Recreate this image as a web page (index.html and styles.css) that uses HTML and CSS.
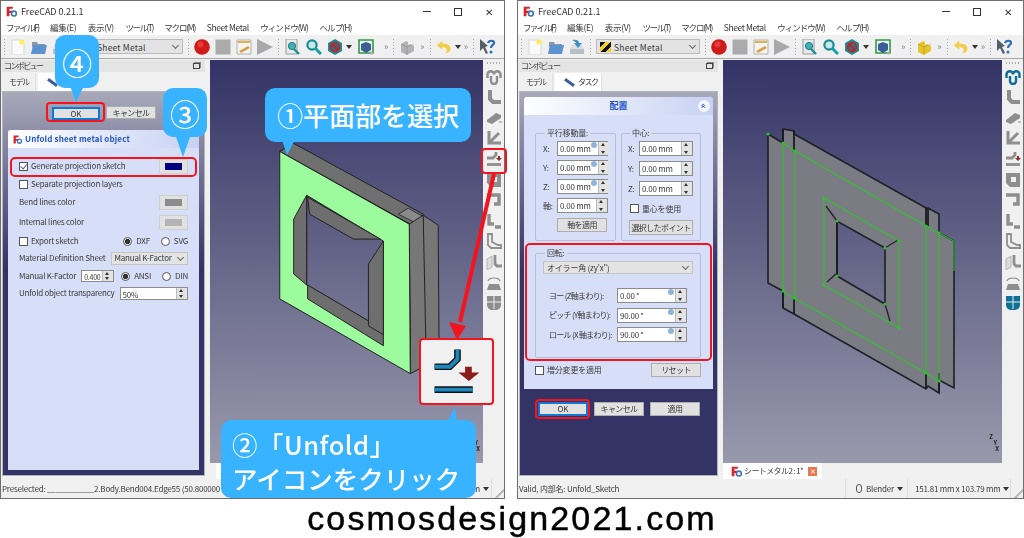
FILE: index.html
```html
<!DOCTYPE html>
<html lang="ja">
<head>
  <meta charset="utf-8">
  <title>FreeCAD Unfold</title>
  <link rel="stylesheet" href="styles.css">
</head>
<body>

<svg class="sprite" width="0" height="0">
  <symbol id="i-logo" viewBox="0 0 16 16">
    <path d="M1 1h9v3H5v3h4v3H5v5H1z" fill="#d5272b"/>
    <circle cx="11.5" cy="11" r="3.6" fill="none" stroke="#3f74b8" stroke-width="2.4"/>
  </symbol>
  <symbol id="i-new" viewBox="0 0 16 16">
    <path d="M2 1h9l3 3v12H2z" fill="#fafafa" stroke="#d8d8d8"/>
    <circle cx="12" cy="3" r="2.6" fill="#ffee55"/>
  </symbol>
  <symbol id="i-open" viewBox="0 0 16 16">
    <path d="M1 3h5l1 2h7v3H1z" fill="#8a97a8"/>
    <path d="M0 15l2-9h14l-2 9z" fill="#5a93d0"/>
  </symbol>
  <symbol id="i-save" viewBox="0 0 16 16">
    <path d="M1 10h14v5H1z" fill="#b9bfc6"/>
    <path d="M3 6h10l2 4H1z" fill="#dde0e3"/>
    <path d="M3 1c4-1 7 0 7 3h3l-4 5-4-5h2c0-1-2-2-4-3z" fill="#3e8ec9"/>
  </symbol>
  <symbol id="i-rec" viewBox="0 0 16 16"><circle cx="8" cy="8" r="7.8" fill="#cf1a1a"/><circle cx="6.5" cy="5.5" r="3" fill="#e83a3a"/></symbol>
  <symbol id="i-stop" viewBox="0 0 16 16"><rect x="0.5" y="0.5" width="15" height="15" fill="#ababab"/></symbol>
  <symbol id="i-macro" viewBox="0 0 16 16">
    <path d="M1 1h14v14H1z" fill="#f4f4f0" stroke="#b0b0b0"/>
    <path d="M2 2h12v2H2z" fill="#e0b050"/>
    <path d="M3 12l9-5 2 2-9 5z" fill="#d9a050"/>
  </symbol>
  <symbol id="i-play" viewBox="0 0 16 16"><path d="M0 0l16 8-16 8z" fill="#a9a9a9"/></symbol>
  <symbol id="i-fit" viewBox="0 0 16 16">
    <path d="M1 0h11v15H1z" fill="#e8eaee" stroke="#9a9a9a"/>
    <circle cx="7" cy="7" r="3.6" fill="#3fb0b5" stroke="#1e7c82"/>
    <path d="M9 10l5 5" stroke="#1e8c92" stroke-width="2.4"/>
  </symbol>
  <symbol id="i-zoom" viewBox="0 0 16 16">
    <circle cx="6" cy="6" r="4.6" fill="#c8e8ea" stroke="#1d8a94" stroke-width="2.2"/>
    <path d="M9 9l6 6" stroke="#17a0a8" stroke-width="3"/>
  </symbol>
  <symbol id="i-style" viewBox="0 0 16 16">
    <path d="M8 0l7 4v8l-7 4-7-4V4z" fill="#1f8b94"/>
    <circle cx="8" cy="8" r="4.4" fill="#2c6f8a" stroke="#c62222" stroke-width="1.8"/>
    <path d="M5 5l6 6" stroke="#c62222" stroke-width="1.8"/>
  </symbol>
  <symbol id="i-box" viewBox="0 0 16 16">
    <path d="M1 1h14v13H1z" fill="none" stroke="#2f9a45" stroke-width="1.6"/>
    <path d="M8 3l5 2v6l-5 3-5-3V5z" fill="#3b5e96"/>
    <circle cx="13.5" cy="14" r="1.6" fill="#aaa"/>
  </symbol>
  <symbol id="i-part" viewBox="0 0 16 16">
    <path d="M2 5l5-3 2 1v3l2-1 4 2v5l-7 4-6-3z" fill="currentColor"/>
    <path d="M2 5l6 3v8M8 8l7-3" fill="none" stroke="#0003" stroke-width=".8"/>
  </symbol>
  <symbol id="i-undo" viewBox="0 0 18 16">
    <path d="M7 1L1 6l6 5V8c3 0 5 1 5 4 0 1-1 3-2 3 5 0 7-3 6-7-1-3-5-4-9-4z" fill="#f2cd4a"/>
  </symbol>
  <symbol id="i-help" viewBox="0 0 16 16">
    <path d="M1 0l8 7-3 1 3 6-2 1-3-6-3 3z" fill="#55606a"/>
    <path d="M9 4c1-3 6-3 6 0 0 2-3 2-3 5" fill="none" stroke="#2b6fb8" stroke-width="2.2"/>
    <circle cx="12" cy="13" r="1.5" fill="#2b6fb8"/>
  </symbol>
  <symbol id="i-arch" viewBox="0 0 16 16">
    <path d="M1.500 9V5.500a3.200 3.200 0 0 1 6.500 0 3.200 3.200 0 0 1 6.500 0V9" fill="none" stroke="currentColor" stroke-width="2.400"/>
    <path d="M5 7v5a3 3 0 0 0 6 0V7" fill="none" stroke="currentColor" stroke-width="2.400"/>
  </symbol>
  <symbol id="i-l" viewBox="0 0 16 16"><path d="M4 1v9l3 3h8" fill="none" stroke="currentColor" stroke-width="4"/></symbol>
  <symbol id="i-block" viewBox="0 0 16 16"><path d="M1 10l9-7 5 2v3l-9 6-5-2z" fill="currentColor"/><path d="M13 12h3" stroke="currentColor"/></symbol>
  <symbol id="i-mitre" viewBox="0 0 16 16"><path d="M3 1v12h12M3 13L13 3" fill="none" stroke="currentColor" stroke-width="3"/></symbol>
  <symbol id="i-unfold" viewBox="0 0 16 16">
    <path d="M1 7h6l3-3V1" fill="none" stroke="currentColor" stroke-width="2.8"/>
    <path d="M1 13.500h14" stroke="currentColor" stroke-width="2.8"/>
    <path d="M12 5h2v2h2l-3 3-3-3h2z" fill="#8a3030"/>
  </symbol>
  <symbol id="i-square" viewBox="0 0 16 16"><path d="M1 1h14v14H5l-4-4z" fill="currentColor"/><path d="M6 5h5v5H6z" fill="#f0f0f0"/></symbol>
  <symbol id="i-hook" viewBox="0 0 16 16"><path d="M1 3h12v9H8" fill="none" stroke="currentColor" stroke-width="3.4"/></symbol>
  <symbol id="i-step" viewBox="0 0 16 16"><path d="M3 1v10h5M9 14h6" fill="none" stroke="currentColor" stroke-width="3.4"/></symbol>
  <symbol id="i-loft" viewBox="0 0 16 16"><path d="M2 1h4v8l6 3h3v3H5l-3-3z" fill="none" stroke="currentColor" stroke-width="1.800"/></symbol>
  <symbol id="i-sketch" viewBox="0 0 16 16">
    <path d="M1 5l5-3v11l-5 3z" fill="#dcdcdc" stroke="#b5b5b5"/>
    <path d="M9 1v9l2 2h5" fill="none" stroke="currentColor" stroke-width="2.800"/>
  </symbol>
  <symbol id="i-stamp" viewBox="0 0 16 16">
    <path d="M2 6c1-4 11-4 12 0" fill="none" stroke="currentColor" stroke-width="1.200"/>
    <path d="M3 9h10l2 6H1z" fill="currentColor"/>
  </symbol>
  <symbol id="i-shield" viewBox="0 0 16 16">
    <path d="M1 1h14v9c0 3-3 5-5 5H6c-2 0-5-2-5-5z" fill="currentColor"/>
    <path d="M8 1v13M1 7h14" stroke="#eee" stroke-width="1"/>
  </symbol>
</svg>

<div class="page">
  <div class="screens">

    <section class="window win-a">
      <header class="titlebar">
        <svg class="logo"><use href="#i-logo"/></svg>
        <span class="title">FreeCAD 0.21.1</span>
        <span class="winbtns"><i class="btn-min"></i><i class="btn-max"></i><i class="btn-close">✕</i></span>
      </header>
      <nav class="menubar">
        <span>ファイル(F)</span><span>編集(E)</span><span>表示(V)</span><span>ツール(T)</span><span>マクロ(M)</span><span>Sheet Metal</span><span>ウィンドウ(W)</span><span>ヘルプ(H)</span>
      </nav>
      <div class="toolbar">
        <i class="grip"></i>
        <svg class="ic"><use href="#i-new"/></svg>
        <svg class="ic"><use href="#i-open"/></svg>
        <svg class="ic"><use href="#i-save"/></svg>
        <i class="grip"></i>
        <div class="wb-combo"><i class="wb-icon"></i><span>Sheet Metal</span><i class="chev"></i></div>
        <i class="grip"></i>
        <svg class="ic"><use href="#i-rec"/></svg>
        <svg class="ic"><use href="#i-stop"/></svg>
        <svg class="ic"><use href="#i-macro"/></svg>
        <svg class="ic"><use href="#i-play"/></svg>
        <i class="grip"></i>
        <svg class="ic first-view"><use href="#i-fit"/></svg>
        <svg class="ic"><use href="#i-zoom"/></svg>
        <svg class="ic"><use href="#i-style"/></svg>
        <i class="drop"></i>
        <svg class="ic"><use href="#i-box"/></svg>
        <span class="more">»</span>
        <i class="grip"></i>
        <svg class="ic part-off"><use href="#i-part"/></svg>
        <span class="more near">»</span>
        <i class="grip"></i>
        <svg class="ic"><use href="#i-undo"/></svg>
        <i class="drop"></i>
        <span class="more tight">»</span>
        <i class="grip"></i>
        <svg class="ic"><use href="#i-help"/></svg>
      </div>
      <div class="main">
        <div class="dock">
          <div class="dock-head"><span>コンボビュー</span><i class="float"></i></div>
          <div class="tabs">
            <span class="tab">モデル</span>
            <span class="tab active"><i class="pencil"></i></span>
          </div>
          <div class="panel">
            <div class="dialog-btns top">
              <button class="btn focus">OK</button>
              <button class="btn">キャンセル</button>
            </div>
            <div class="taskbox">
              <div class="task-head left">
                <svg class="logo small"><use href="#i-logo"/></svg>
                <span>Unfold sheet metal object</span>
              </div>
              <div class="unfold-form">
                <div class="row"><i class="check on"></i><span>Generate projection sketch</span><span class="swatch"><b class="c-navy"></b></span></div>
                <div class="row"><i class="check"></i><span>Separate projection layers</span></div>
                <div class="row"><span>Bend lines color</span><span class="swatch"><b class="c-grey"></b></span></div>
                <div class="row"><span>Internal lines color</span><span class="swatch"><b class="c-light"></b></span></div>
                <div class="row"><i class="check"></i><span>Export sketch</span><span class="radios"><i class="radio on"></i><span>DXF</span><i class="radio"></i><span>SVG</span></span></div>
                <div class="row"><span>Material Definition Sheet</span><span class="combo grow">Manual K-Factor<i class="chev"></i></span></div>
                <div class="row"><span>Manual K-Factor</span><span class="spin kf"><span class="val">0.400</span><i class="arrows"></i></span><span class="radios"><i class="radio on"></i><span>ANSI</span><i class="radio"></i><span>DIN</span></span></div>
                <div class="row"><span>Unfold object transparency</span><span class="spin grow"><span class="val">50%</span><i class="arrows"></i></span></div>
              </div>
            </div>
          </div>
        </div>
        <div class="view-col">
          <div class="viewport">
            <svg class="model" viewBox="209 59 274 403">
              <path d="M293 142L423 213 410 223 279 150z" fill="#6f6f6f" stroke="#222"/>
              <path d="M398 213l10-6 14 8-8 6z" fill="#8a8a8a" stroke="#333"/>
              <path d="M409 223L423 214 438 224 439 358 410 373z" fill="#777" stroke="#222"/>
              <path d="M423 214L426 360M409 223L410 373" stroke="#222" fill="none"/>
              <path d="M279 150L409 223 410 373 279 298zM306 194L306 284 383 329 383 240z" fill="#9cfb9c" fill-rule="evenodd" stroke="#222"/>
              <path d="M306 194L293 218 293 273 306 284z" fill="#6e6e6e" stroke="#222"/>
              <path d="M307 196L380 238 353 238 309 213z" fill="#6e6e6e" stroke="#222"/>
              <path d="M307 284L383 329 383 345 307 298z" fill="#6e6e6e" stroke="#222"/>
              <path d="M383 240L368 263 368 325 383 334z" fill="#6e6e6e" stroke="#222"/>
            </svg>
            <div class="axes"><span>Z</span><span>Y</span><span>X</span></div>
          </div>
          <div class="doc-tabs">
            <span class="doc-tab"><svg class="logo tab-logo"><use href="#i-logo"/></svg></span>
          </div>
        </div>
        <div class="sidebar">
          <i class="grip-h"></i>
          <svg class="ic"><use href="#i-arch"/></svg>
          <svg class="ic"><use href="#i-l"/></svg>
          <svg class="ic"><use href="#i-block"/></svg>
          <svg class="ic"><use href="#i-mitre"/></svg>
          <svg class="ic"><use href="#i-unfold"/></svg>
          <svg class="ic"><use href="#i-square"/></svg>
          <svg class="ic"><use href="#i-hook"/></svg>
          <svg class="ic"><use href="#i-step"/></svg>
          <svg class="ic"><use href="#i-loft"/></svg>
          <svg class="ic"><use href="#i-sketch"/></svg>
          <svg class="ic"><use href="#i-stamp"/></svg>
          <svg class="ic"><use href="#i-shield"/></svg>
        </div>
      </div>
      <footer class="statusbar">
        <span class="status-msg">Preselected: ___________2.Body.Bend004.Edge55 (50.800000</span>
        <span class="status-cell end">m<i class="drop"></i></span>
        <i class="size-grip"></i>
      </footer>
    </section>

    <section class="window win-b">
      <header class="titlebar">
        <svg class="logo"><use href="#i-logo"/></svg>
        <span class="title">FreeCAD 0.21.1</span>
        <span class="winbtns"><i class="btn-min"></i><i class="btn-max"></i><i class="btn-close">✕</i></span>
      </header>
      <nav class="menubar">
        <span>ファイル(F)</span><span>編集(E)</span><span>表示(V)</span><span>ツール(T)</span><span>マクロ(M)</span><span>Sheet Metal</span><span>ウィンドウ(W)</span><span>ヘルプ(H)</span>
      </nav>
      <div class="toolbar">
        <i class="grip"></i>
        <svg class="ic"><use href="#i-new"/></svg>
        <svg class="ic"><use href="#i-open"/></svg>
        <svg class="ic"><use href="#i-save"/></svg>
        <i class="grip"></i>
        <div class="wb-combo"><i class="wb-icon"></i><span>Sheet Metal</span><i class="chev"></i></div>
        <i class="grip"></i>
        <svg class="ic"><use href="#i-rec"/></svg>
        <svg class="ic"><use href="#i-stop"/></svg>
        <svg class="ic"><use href="#i-macro"/></svg>
        <svg class="ic"><use href="#i-play"/></svg>
        <i class="grip"></i>
        <svg class="ic first-view"><use href="#i-fit"/></svg>
        <svg class="ic"><use href="#i-zoom"/></svg>
        <svg class="ic"><use href="#i-style"/></svg>
        <i class="drop"></i>
        <svg class="ic"><use href="#i-box"/></svg>
        <span class="more">»</span>
        <i class="grip"></i>
        <svg class="ic part-on"><use href="#i-part"/></svg>
        <span class="more near">»</span>
        <i class="grip"></i>
        <svg class="ic"><use href="#i-undo"/></svg>
        <i class="drop"></i>
        <span class="more tight">»</span>
        <i class="grip"></i>
        <svg class="ic"><use href="#i-help"/></svg>
      </div>
      <div class="main">
        <div class="dock">
          <div class="dock-head"><span>コンボビュー</span><i class="float"></i></div>
          <div class="tabs">
            <span class="tab">モデル</span>
            <span class="tab active"><i class="pencil"></i>タスク</span>
          </div>
          <div class="panel">
            <div class="taskbox placement">
              <div class="task-head">
                <span>配置</span><i class="collapse">»</i>
              </div>
              <div class="placement-form">
                <div class="groups">
                  <fieldset class="group move">
                    <legend>平行移動量:</legend>
                    <div class="field"><label>X:</label><span class="spin"><span class="val">0.00 mm</span><i class="fx"></i><i class="arrows"></i></span></div>
                    <div class="field"><label>Y:</label><span class="spin"><span class="val">0.00 mm</span><i class="fx"></i><i class="arrows"></i></span></div>
                    <div class="field"><label>Z:</label><span class="spin"><span class="val">0.00 mm</span><i class="fx"></i><i class="arrows"></i></span></div>
                    <div class="field"><label>軸:</label><span class="spin"><span class="val">0.00 mm</span><i class="arrows"></i></span></div>
                    <button class="btn apply-axis">軸を適用</button>
                  </fieldset>
                  <fieldset class="group center">
                    <legend>中心:</legend>
                    <div class="field"><label>X:</label><span class="spin"><span class="val">0.00 mm</span><i class="arrows"></i></span></div>
                    <div class="field"><label>Y:</label><span class="spin"><span class="val">0.00 mm</span><i class="arrows"></i></span></div>
                    <div class="field"><label>Z:</label><span class="spin"><span class="val">0.00 mm</span><i class="arrows"></i></span></div>
                    <div class="field cog"><i class="check"></i><span>重心を使用</span></div>
                    <button class="btn pick">選択したポイント</button>
                  </fieldset>
                </div>
                <fieldset class="group rotation">
                  <legend>回転:</legend>
                  <span class="combo euler">オイラー角 (zy'x")<i class="chev"></i></span>
                  <div class="field"><label>ヨー (Z軸まわり):</label><span class="spin"><span class="val">0.00 °</span><i class="fx"></i><i class="arrows"></i></span></div>
                  <div class="field"><label>ピッチ (Y軸まわり):</label><span class="spin"><span class="val">90.00 °</span><i class="fx"></i><i class="arrows"></i></span></div>
                  <div class="field"><label>ロール (X 軸まわり):</label><span class="spin"><span class="val">90.00 °</span><i class="fx"></i><i class="arrows"></i></span></div>
                </fieldset>
                <div class="incremental"><i class="check"></i><span>増分変更を適用</span><button class="btn reset">リセット</button></div>
              </div>
            </div>
            <div class="dialog-btns bottom">
              <button class="btn focus">OK</button>
              <button class="btn">キャンセル</button>
              <button class="btn">適用</button>
            </div>
          </div>
        </div>
        <div class="view-col">
          <div class="viewport">
            <svg class="model" viewBox="207 59 275 403">
              <g transform="translate(-517 0)">
                <path d="M767 133L782 142 782 128 793 130 793 133 925 207 927 207 938 213 938 232 953 240 953 387 938 379 938 392 927 385 925 388 793 313 782 307 782 290 767 282zM836 220L836 275 884 303 884 247z" fill="#7b7b84" fill-rule="evenodd" stroke="#1f1f25" stroke-width="1.600"/>
                <path d="M793 130L793 150M782 128L782 142M925 207L925 225M927 207L927 225M938 372L938 392M925 372L925 388M782 290L782 307M793 297L793 313M836 220L836 275" stroke="#1b1b20" stroke-width="1.800" fill="none"/>
                <path d="M836 275L884 303M825 205L836 220M889 320L884 303M826 281L836 272M897 239L884 247" stroke="#26262c" stroke-width="1.400" fill="none"/>
                <g stroke="#2bc42b" stroke-width="1.100" fill="none">
                  <path d="M782 142V290M794 150V298M925 225V372M938 232V380"/>
                  <path d="M782 142L794 150 925 225 938 232 953 240V270"/>
                  <path d="M782 290L793 297 925 372 938 380"/>
                  <path d="M823 197L898 240V327L823 284z"/>
                </g>
                <path d="M767 133h.1M782 142h.1M794 150h.1M925 225h.1M938 232h.1M782 290h.1M793 297h.1M925 372h.1M938 380h.1M823 197h.1M898 240h.1M898 327h.1M823 284h.1M836 220h.1M884 247h.1M836 275h.1M884 303h.1" stroke="#2bc42b" stroke-width="3" stroke-linecap="round" fill="none"/>
              </g>
            </svg>
            <div class="axes"><span>Z</span><span>Y</span><span>X</span></div>
          </div>
          <div class="doc-tabs">
            <span class="doc-tab"><svg class="logo tab-logo"><use href="#i-logo"/></svg><span>シートメタル2 : 1*</span><i class="tab-x">✕</i></span>
          </div>
        </div>
        <div class="sidebar">
          <i class="grip-h"></i>
          <svg class="ic teal"><use href="#i-arch"/></svg>
          <svg class="ic"><use href="#i-l"/></svg>
          <svg class="ic"><use href="#i-block"/></svg>
          <svg class="ic"><use href="#i-mitre"/></svg>
          <svg class="ic"><use href="#i-unfold"/></svg>
          <svg class="ic"><use href="#i-square"/></svg>
          <svg class="ic"><use href="#i-hook"/></svg>
          <svg class="ic"><use href="#i-step"/></svg>
          <svg class="ic"><use href="#i-loft"/></svg>
          <svg class="ic"><use href="#i-sketch"/></svg>
          <svg class="ic"><use href="#i-stamp"/></svg>
          <svg class="ic teal"><use href="#i-shield"/></svg>
        </div>
      </div>
      <footer class="statusbar">
        <span class="status-msg">Valid, 内部名: Unfold_Sketch</span>
        <span class="status-cell nav"><i class="mouse"></i>Blender<i class="drop"></i></span>
        <span class="status-cell dims">151.81 mm x 103.79 mm<i class="drop"></i></span>
        <i class="size-grip"></i>
      </footer>
    </section>

    <svg class="marks" viewBox="0 0 1024 538" width="1024" height="538">
      <g fill="#38b3ff">
        <path d="M70 86L76 102 84 86z"/>
        <path d="M175 134L183 157 191 134z"/>
        <path d="M282 140L287 155 295 140z"/>
        <path d="M447 422L455 407 457 422z"/>
      </g>
      <g fill="none" stroke="#f5141e" stroke-width="2">
        <rect x="47" y="103" width="57" height="18" rx="3"/>
        <rect x="11" y="158" width="185" height="18" rx="4"/>
        <rect x="482" y="149" width="24" height="24" rx="3"/>
        <rect x="526" y="244" width="185" height="116" rx="4"/>
        <rect x="536" y="400" width="53" height="18" rx="3"/>
      </g>
      <path d="M494 174L460 322" stroke="#f5141e" stroke-width="4"/>
      <path d="M457 340L449 322 466 326z" fill="#f5141e"/>
    </svg>

    <div class="zoom-icon">
      <svg viewBox="0 0 74 66">
        <path d="M14 28H30L38 20V10" fill="none" stroke="#111" stroke-width="7"/>
        <path d="M14 28H30L38 20V10" fill="none" stroke="#1d86bd" stroke-width="4"/>
        <path d="M14 52H54" stroke="#111" stroke-width="7"/>
        <path d="M14 52H54" stroke="#1d86bd" stroke-width="4"/>
        <path d="M46 28h7v6h8L50 43 39 34h7z" fill="#8c1c1c"/>
      </svg>
    </div>

    <div class="callout c-four">④</div>
    <div class="callout c-three">③</div>
    <div class="callout c-one">①平面部を選択</div>
    <div class="callout c-two"><span class="c2-a">②「Unfold」</span><span>アイコンをクリック</span></div>
  </div>

  <p class="caption">cosmosdesign2021.com</p>
</div>

</body>
</html>
```

FILE: styles.css
```css
*, *::before, *::after { box-sizing: border-box }

body {
  margin: 0;
  background: #fff;
  font: 8px/10px "Noto Sans CJK JP", "Noto Sans", sans-serif;
  color: #3a3a3a;
  overflow: hidden;
}

i { font-style: normal; display: block; }

.sprite { position: absolute; }

.page {
  width: 1024px;
  height: 538px;
  filter: blur(.35px);
}

.screens {
  position: relative;
  display: flex;
  height: 499px;
}

.marks {
  position: absolute;
  left: 0;
  top: 0;
}


/*///////////// Window */

.window {
  display: flex;
  flex-direction: column;
  height: 499px;
  border: 1px solid #6e6e6e;
  background: #f0f0f0;
}

.win-a { width: 505px; --dock: 203px; --pad: 5px; }
.win-b { width: 507px; margin-left: 12px; --dock: 199px; --pad: 4px; }

.titlebar {
  display: flex;
  align-items: center;
  height: 21px;
  padding-left: 5px;
  background: #fff;
  flex: none;
}

.logo { width: 11px; height: 11px; }
.logo.small { width: 9px; height: 9px; flex: none; }
.tab-logo { flex: none; }

.title {
  margin-left: 4px;
  font-size: 9px;
  color: #333;
}

.winbtns {
  display: flex;
  margin-left: auto;
  height: 21px;
}

.winbtns i {
  width: 31px;
  display: flex;
  align-items: center;
  justify-content: center;
  color: #333;
}

.btn-min::before { content: ''; width: 8px; height: 1px; background: #333; }
.btn-max::before { content: ''; width: 8px; height: 8px; border: 1px solid #333; }
.btn-close { font-size: 10px; }

.menubar {
  display: flex;
  flex: none;
  height: 13px;
  padding: 0 0 3px 5px;
  background: #fff;
  align-items: center;
  font-size: 8.5px;
  letter-spacing: -.9px;
}

.menubar span { margin-right: 11.5px; }
.menubar span:nth-child(1) { letter-spacing: -1.7px; }
.menubar span:nth-child(2),
.menubar span:nth-child(3) { letter-spacing: -.3px; }
.menubar span:nth-child(4) { letter-spacing: -1.5px; }
.menubar span:nth-child(5) { letter-spacing: -1.2px; }
.menubar span:nth-child(6) { letter-spacing: -.4px; }
.menubar span:nth-child(7) { letter-spacing: -1px; }


/*///////////// Toolbar */

.toolbar {
  display: flex;
  align-items: center;
  flex: none;
  height: 24px;
  gap: 5px;
  padding-left: 3px;
  border-bottom: 1px solid #a9a9a9;
}

.ic {
  width: 16px;
  height: 16px;
  flex: none;
}

.grip {
  width: 3px;
  height: 18px;
  margin: 0 -1px;
  background: radial-gradient(circle, #aaa 0 .7px, transparent 1px) 0 0 / 3px 3px;
  flex: none;
}

.wb-combo {
  display: flex;
  align-items: center;
  width: 104px;
  height: 15px;
  padding-left: 3px;
  background: #e3e3e3;
  border: 1px solid #bbb;
  font-size: 8.500px;
  letter-spacing: .2px;
}

.wb-icon {
  width: 11px;
  height: 10px;
  margin-right: 3px;
  background: linear-gradient(135deg, #111 0 25%, #f2d21c 25% 50%, #111 50% 75%, #f2d21c 75%);
}

.chev {
  width: 5px;
  height: 5px;
  margin: -2px 4px 0 auto;
  border: solid #666;
  border-width: 0 1px 1px 0;
  transform: rotate(45deg);
}

.drop {
  width: 0;
  height: 0;
  margin-left: -2px;
  margin-right: 1px;
  border: 3px solid transparent;
  border-top: 4px solid #333;
  border-bottom: 0;
  flex: none;
}

.more { font-size: 9px; color: #888; margin-left: 5px; flex: none; }
.more.near { margin-left: 0; }
.more.tight { margin-left: -3px; }

.first-view { margin-left: 1px; }
.part-off { color: #b3b3b3; }
.part-on { color: #e5c52a; }


/*///////////// Dock */

.main {
  display: flex;
  flex: 1;
  min-height: 0;
  padding: 1px 0 0 1px;
}

.dock {
  display: flex;
  flex-direction: column;
  width: var(--dock);
  padding-bottom: 3px;
  flex: none;
}

.dock-head {
  display: flex;
  align-items: center;
  justify-content: space-between;
  height: 12px;
  padding: 0 5px 0 2px;
  background: #e4e4e4;
  letter-spacing: -1.6px;
  flex: none;
}

.float {
  width: 7px;
  height: 6px;
  border: 1px solid #444;
  box-shadow: 1px -1px 0 #888;
}

.tabs {
  display: flex;
  flex: none;
  height: 19px;
  padding: 1px 0 0 1px;
  align-items: stretch;
}

.tab {
  display: flex;
  align-items: center;
  width: 33px;
  justify-content: center;
  letter-spacing: -1.3px;
  background: #f0f0f0;
  border-right: 1px solid #e0e0e0;
}

.tab.active {
  width: 47px;
  margin-left: 2px;
  background: #fff;
  letter-spacing: -1.5px;
  justify-content: flex-start;
  padding-left: 9px;
}

.pencil {
  width: 11px;
  height: 3px;
  margin-right: 3px;
  background: #3c5f9a;
  transform: rotate(35deg);
  flex: none;
}

.panel {
  display: flex;
  flex-direction: column;
  flex: 1;
  padding: 0 var(--pad);
  background: linear-gradient(#a9a9ba, #7a7a9c 18%, #333366 46%);
  border: 1px solid #b4b4be;
}


/*///////////// Task boxes */

.taskbox {
  display: flex;
  flex-direction: column;
  background: #d6dff7;
  border-radius: 3px 3px 0 0;
}

.win-a .taskbox { flex: 1; margin-bottom: 5px; }
.placement { height: 292px; margin-top: 5px; }

.task-head {
  display: flex;
  align-items: center;
  justify-content: center;
  position: relative;
  flex: none;
  height: 18px;
  background: linear-gradient(90deg, #fff, #c7d2f3);
  color: #2154c8;
  font-weight: 700;
  font-size: 9px;
  border-radius: 3px 3px 0 0;
}

.task-head.left {
  justify-content: flex-start;
  gap: 3px;
  padding-left: 5px;
  font-size: 8px;
  letter-spacing: .15px;
}

.collapse {
  position: absolute;
  right: 3px;
  top: 3px;
  width: 12px;
  height: 12px;
  line-height: 10px;
  border-radius: 50%;
  background: #f4f6fd;
  font-size: 9px;
  text-align: center;
  transform: rotate(-90deg);
}

.dialog-btns { display: flex; flex: none; gap: 6px; }
.dialog-btns.top { height: 38px; padding: 14px 0 0 44px; }
.dialog-btns.bottom { padding: 13px 0 0 14px; }

.btn {
  height: 14px;
  width: 50px;
  padding: 0;
  border: 1px solid #adadad;
  background: #e1e1e1;
  font: inherit;
  color: #333;
  letter-spacing: -.6px;
}

.btn.focus { border: 2px solid #0f78d2; letter-spacing: 0; }


/*///////////// Form pieces */

.check {
  position: relative;
  width: 9px;
  height: 9px;
  margin-right: 3px;
  background: #fff;
  border: 1px solid #555;
  flex: none;
}

.check.on::after {
  content: '';
  position: absolute;
  left: 2px;
  top: -1px;
  width: 4px;
  height: 7px;
  border: solid #666;
  border-width: 0 1px 1px 0;
  transform: rotate(40deg);
}

.radio {
  width: 9px;
  height: 9px;
  margin: 0 4px 0 11px;
  border-radius: 50%;
  background: #fff;
  border: 1px solid #555;
  flex: none;
}

.radio:first-child { margin-left: 0; }
.radio.on { background: radial-gradient(circle, #333 0 2.400px, #fff 3px); }

.radios { display: flex; align-items: center; margin-left: auto; }

.swatch {
  width: 29px;
  height: 15px;
  margin-left: auto;
  padding: 3px 5px;
  background: #e1e1e1;
  border: 1px solid #cfcfcf;
}

.swatch b { display: block; height: 100%; }
.c-navy { background: #000080; }
.c-grey { background: #8c8c8c; }
.c-light { background: #b4b4b4; }

.combo {
  display: flex;
  align-items: center;
  height: 13px;
  padding-left: 3px;
  background: #e3e3e3;
  border: 1px solid #c4c4c4;
}

.spin {
  display: flex;
  align-items: stretch;
  height: 15px;
  background: #fff;
  border: 1px solid #8c8c8c;
}

.val { padding-left: 2px; flex: 1; line-height: 13px; white-space: nowrap; }

.fx {
  width: 6px;
  height: 6px;
  margin: 0 1px 0 0;
  border-radius: 50%;
  background: #8fb4dc;
  flex: none;
}

.arrows {
  position: relative;
  width: 11px;
  flex: none;
  background: #e3e3e3;
  border-left: 1px solid #bbb;
}

.arrows::before,
.arrows::after {
  content: '';
  position: absolute;
  left: 2px;
  border: 2.500px solid transparent;
}

.arrows::before { top: -1px; border-bottom: 3px solid #333; }
.arrows::after { bottom: -1px; border-top: 3px solid #333; }

.grow { flex: 1; min-width: 0; }


/*///////////// Unfold form */

.unfold-form {
  display: grid;
  grid-template-columns: minmax(0, 1fr);
  grid-template-rows: 18px 18px 18px 22px 16px 18px 18px 16px;
  padding: 9px 11px 0 11px;
}

.row {
  display: flex;
  align-items: center;
  letter-spacing: -.22px;
  white-space: nowrap;
}

.row .spin, .row .combo { height: 13px; margin-left: 5px; }
.row .combo { overflow: hidden; }
.row .swatch { height: 15px; }
.row .kf { flex: 0 0 33px; height: 12px; }
.row .kf .val { font-size: 7px; }

.row .check { margin-right: 3px; }

.win-a .dialog-btns .btn { height: 13px; }
.win-a .dialog-btns .focus { margin-top: 1px; width: 48px; }


/*///////////// Placement form */

.placement-form {
  display: flex;
  flex-direction: column;
  padding: 13px 11px 0 11px;
  flex: 1;
  letter-spacing: -.2px;
}

.groups { display: flex; gap: 5px; }

.group {
  margin: 0;
  min-width: 0;
  border: 1px solid #b6bed6;
  border-radius: 2px;
}

.group legend {
  padding: 0 2px;
  margin-left: 2px;
  line-height: 10px;
}

.field {
  display: flex;
  align-items: center;
  height: 15px;
}

.move { width: 81px; height: 113px; padding: 3px 7px 0 7px; }
.center { width: 80px; height: 113px; padding: 3px 7px 0 6px; }

.field label { flex: 1; white-space: nowrap; }
.move .spin { width: 51px; }
.center .spin { width: 54px; }
.move .field + .field { margin-top: 4px; }
.center .field + .field { margin-top: 5px; }

.apply-axis { display: block; margin: 5px 0 0 14px; height: 14px; }

.center .cog { margin: 4px 0 0 2px; }
.pick { display: block; width: 64px; height: 15px; margin: 4px 0 0 1px; }

.rotation {
  margin-top: 7px;
  width: 166px;
  height: 110px;
  padding: 3px 7px 0 7px;
}

.euler { height: 13px; margin-bottom: 14px; }
.rotation .field { padding: 0 6px; margin-bottom: 4.500px; }
.rotation .spin { width: 70px; flex: none; }
.rotation .field label { letter-spacing: -.7px; }

.incremental {
  display: flex;
  align-items: center;
  margin-top: 5px;
}

.reset { margin: 0 1px 0 auto; }


/*///////////// Viewport */

.view-col {
  display: flex;
  flex-direction: column;
  flex: 1;
  min-width: 0;
  margin-left: 5px;
}

.viewport {
  position: relative;
  flex: 1;
  min-height: 0;
  background: linear-gradient(#333366, #9999ad);
}

.model {
  display: block;
  width: 100%;
  height: 100%;
}

.axes {
  position: absolute;
  right: 3px;
  bottom: 11px;
  display: flex;
  flex-direction: column;
  align-items: flex-end;
  font-size: 6px;
  line-height: 6px;
  font-weight: 700;
  color: #222;
}

.axes span:first-child { margin-right: 6px; }
.axes span:nth-child(2) { margin-right: 2px; }

.doc-tabs {
  height: 16px;
  flex: none;
  display: flex;
}

.doc-tab {
  display: flex;
  align-items: center;
  gap: 2px;
  height: 16px;
  width: 99px;
  padding-left: 8px;
  background: #fff;
  letter-spacing: -.6px;
  white-space: nowrap;
}

.win-a .doc-tab { margin-left: 6px; }

.tab-x {
  width: 9px;
  height: 9px;
  margin-left: 3px;
  background: #e9764f;
  color: #fff;
  font-size: 7px;
  line-height: 9px;
  text-align: center;
}

.sidebar {
  display: flex;
  flex-direction: column;
  align-items: center;
  flex: none;
  width: 20px;
  margin-left: 1px;
  padding-top: 2px;
  gap: 4.600px;
  color: #8e8e8e;
}

.sidebar .teal { color: #0f6f96; }

.grip-h {
  width: 16px;
  height: 2px;
  background: radial-gradient(circle, #aaa 0 .7px, transparent 1px) 0 0 / 3px 2px;
}


/*///////////// Status bar */

.statusbar {
  display: flex;
  align-items: center;
  flex: none;
  height: 19px;
  padding-left: 1px;
  letter-spacing: -.2px;
  white-space: nowrap;
  overflow: hidden;
}

.status-msg { flex: 1; overflow: hidden; }
.win-a .status-msg { flex: 0 0 218px; margin-right: auto; }

.status-cell {
  display: flex;
  align-items: center;
  height: 100%;
  padding: 0 4px;
  border-left: 1px solid #ddd;
}

.status-cell .drop { margin-left: 3px; margin-right: 0; }
.end { border: 0; padding: 0 2px 0 0; }
.nav { width: 62px; padding-left: 10px; }
.dims { width: 103px; padding-left: 7px; }

.mouse {
  width: 6px;
  height: 9px;
  margin-right: 4px;
  border: 1px solid #555;
  border-radius: 3px;
}

.size-grip {
  width: 13px;
  height: 100%;
  border-left: 1px solid #ddd;
  background: linear-gradient(135deg, transparent 70%, #bbb 70% 78%, transparent 78%);
}


/*///////////// Annotations */

.callout {
  position: absolute;
  background: #38b3ff;
  color: #fff;
  border-radius: 10px;
  font-weight: 500;
  font-family: "Noto Sans CJK JP", sans-serif;
  display: flex;
  align-items: center;
  justify-content: center;
}

.c-four { left: 55px; top: 35px; width: 44px; height: 53px; font-size: 30px; line-height: 1; }
.c-three { left: 163px; top: 88px; width: 44px; height: 49px; font-size: 30px; line-height: 1; }
.c-one { left: 265px; top: 88px; width: 206px; height: 54px; font-size: 26px; line-height: 1; }

.c-two {
  left: 221px;
  top: 420px;
  width: 255px;
  height: 78px;
  padding: 7px 0 0 11px;
  flex-direction: column;
  align-items: flex-start;
  justify-content: flex-start;
  font-size: 25.500px;
  line-height: 34px;
  white-space: nowrap;
}

.c2-a { letter-spacing: .5px; }

.zoom-icon {
  position: absolute;
  left: 419px;
  top: 338px;
  width: 75px;
  height: 67px;
  padding: 0;
  background: #f0f0f0;
  border: 2px solid #f5141e;
  border-radius: 4px;
}

.zoom-icon svg { display: block; width: 100%; height: 100%; filter: blur(.6px); }

.caption {
  margin: 0;
  text-align: center;
  font: 34px/38px "Liberation Sans", Arial, sans-serif;
  letter-spacing: 2.150px;
  color: #000;
  -webkit-text-stroke: .5px #000;
}
```
